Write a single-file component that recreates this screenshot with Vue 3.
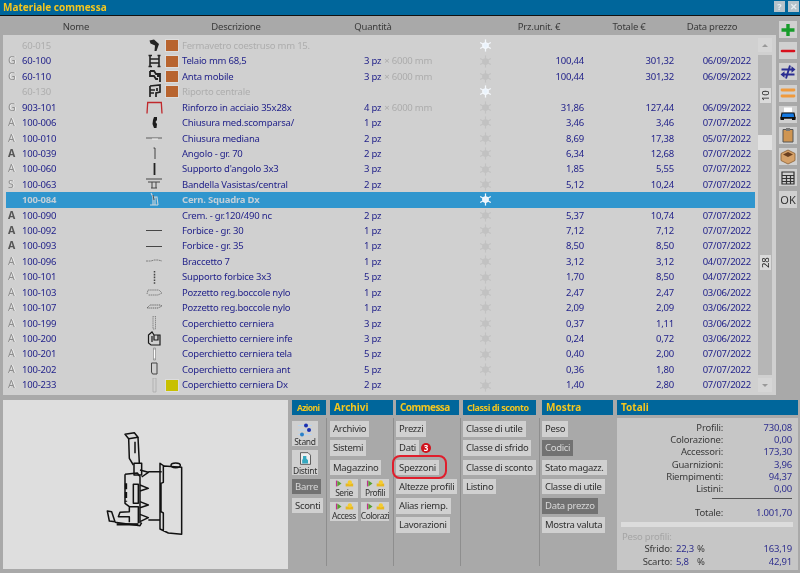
<script setup>
const ico = {
  ferma: [{ d: 'M4.5 2.5 L9 1.5 L14 6 L11.5 13 L9.5 13 L10 7.5 L5.5 5.5 Z', f: '#222' }],
  telaio: [{ d: 'M5 1 V13 M14 1 V13 M5 5 H14 M5 9 H14 M3.5 1.5 H7 M3.5 12.5 H7 M12.5 1.5 H15.5 M12.5 12.5 H15.5', s: '#222', w: 1.6 }],
  anta: [{ d: 'M5 2 H9 L11 5 H15 V13 M5 2 V7 H9 L11 10 H13 M12 7 H15', s: '#222', w: 1.8 }],
  riporto: [{ d: 'M5 2 L15 1 V8 L11 9 V13 M5 2 V13 M5 6 H10 M5 9 H9 M12 4 V7', s: '#222', w: 1.7 }],
  rinf: [{ d: 'M2 13.5 L2.7 2.5 H16.3 L17 13.5', s: '#c0282c', w: 1.3 }],
  blob: [{ d: 'M9 2 H12 L12 5 L10.5 7 L12 9 L11.5 13 H9 L7.5 9 L8 5 Z', f: '#1c1c1c' }],
  med: [{ d: 'M1 7 H17', s: '#666', w: 1.1 }, { d: 'M7 8 H13', s: '#f0f0f0', w: 1 }],
  angolo: [{ d: 'M8.5 2 H10 V13', s: '#333', w: 0.9 }],
  supp: [{ d: 'M9.5 1 V13', s: '#222', w: 1.8 }],
  band: [{ d: 'M1 2 H17 M3 5 H15 M7 5 V11 M11 5 V11 M6 11 H12', s: '#444', w: 1 }],
  cern: [{ d: 'M6 1 L8 5 V13 H13 M10 5 V13 M8 5 H12 L13 13 M5 13 H8', s: '#cfd6da', w: 1.1 }, { d: 'M8 3 L9 8', s: '#555', w: 1 }],
  line: [{ d: 'M1 7.5 H17', s: '#222', w: 0.8 }],
  brac: [{ d: 'M1 7 H6 L9 6 H13 L17 7', s: '#777', w: 0.9, a: '2 0.6' }],
  dash: [{ d: 'M9.5 1 V14', s: '#444', w: 1.5, a: '1.6 1.2' }],
  pozz: [{ d: 'M2 9 L3 5 H14 L17 8 L13 10 H3', s: '#777', w: 0.9, a: '1.5 0.6' }],
  pozz2: [{ d: 'M2 8 L5 5 H15 L17 6 L13 8 Z', s: '#666', w: 1, a: '1.2 0.7' }],
  cop: [{ d: 'M8 0 H10.5 V13 H8 Z', s: '#777', w: 0.8, a: '1.5 0.6' }],
  box: [{ d: 'M3.5 4 L7 1 L9 4 H15 V14 H6 L3.5 12 Z M9 4 V9 H13 V4 M7 5 V11', s: '#1a1a1a', w: 1.2 }],
  tela: [{ d: 'M8.5 1 H10.5 V13 H8.5 Z', s: '#888', w: 0.7 }, { d: 'M9.5 3 V11', s: '#fff', w: 1.2 }],
  ant: [{ d: 'M6.5 1 H12 V12 H7.5 L6.5 10 Z', s: '#444', w: 1 }],
  dx: [{ d: 'M8 0 H11 V14 H8 Z', s: '#a8a8a8', w: 0.7 }]
}
const sixty = '× 6000 mm'
const brown = '#b8642f'
const rows = [
  { mark: '', code: '60-015', desc: 'Fermavetro coestruso mm 15.', icon: 'ferma', sw: brown, dim: true, flake: true },
  { mark: 'G', code: '60-100', desc: 'Telaio mm 68,5', icon: 'telaio', sw: brown, qty: '3 pz', x: sixty, prz: '100,44', tot: '301,32', date: '06/09/2022' },
  { mark: 'G', code: '60-110', desc: 'Anta mobile', icon: 'anta', sw: brown, qty: '3 pz', x: sixty, prz: '100,44', tot: '301,32', date: '06/09/2022' },
  { mark: '', code: '60-130', desc: 'Riporto centrale', icon: 'riporto', sw: brown, dim: true, flake: true },
  { mark: 'G', code: '903-101', desc: 'Rinforzo in acciaio 35x28x', icon: 'rinf', qty: '4 pz', x: sixty, prz: '31,86', tot: '127,44', date: '06/09/2022' },
  { mark: 'A', code: '100-006', desc: 'Chiusura med.scomparsa/', icon: 'blob', qty: '1 pz', prz: '3,46', tot: '3,46', date: '07/07/2022' },
  { mark: 'A', code: '100-010', desc: 'Chiusura mediana', icon: 'med', qty: '2 pz', prz: '8,69', tot: '17,38', date: '05/07/2022' },
  { mark: 'A', strong: true, code: '100-039', desc: 'Angolo - gr. 70', icon: 'angolo', qty: '2 pz', prz: '6,34', tot: '12,68', date: '07/07/2022' },
  { mark: 'A', code: '100-060', desc: "Supporto d'angolo 3x3", icon: 'supp', qty: '3 pz', prz: '1,85', tot: '5,55', date: '07/07/2022' },
  { mark: 'S', code: '100-063', desc: 'Bandella Vasistas/central', icon: 'band', qty: '2 pz', prz: '5,12', tot: '10,24', date: '07/07/2022' },
  { mark: '', code: '100-084', desc: 'Cern. Squadra Dx', icon: 'cern', sel: true, flake: true },
  { mark: 'A', strong: true, code: '100-090', desc: 'Crem. - gr.120/490 nc', qty: '2 pz', prz: '5,37', tot: '10,74', date: '07/07/2022' },
  { mark: 'A', strong: true, code: '100-092', desc: 'Forbice - gr. 30', icon: 'line', qty: '1 pz', prz: '7,12', tot: '7,12', date: '07/07/2022' },
  { mark: 'A', strong: true, code: '100-093', desc: 'Forbice - gr. 35', icon: 'line', qty: '1 pz', prz: '8,50', tot: '8,50', date: '07/07/2022' },
  { mark: 'A', code: '100-096', desc: 'Braccetto 7', icon: 'brac', qty: '1 pz', prz: '3,12', tot: '3,12', date: '04/07/2022' },
  { mark: 'A', code: '100-101', desc: 'Supporto forbice 3x3', icon: 'dash', qty: '5 pz', prz: '1,70', tot: '8,50', date: '04/07/2022' },
  { mark: 'A', code: '100-103', desc: 'Pozzetto reg.boccole nylo', icon: 'pozz', qty: '1 pz', prz: '2,47', tot: '2,47', date: '03/06/2022' },
  { mark: 'A', code: '100-107', desc: 'Pozzetto reg.boccole nylo', icon: 'pozz2', qty: '1 pz', prz: '2,09', tot: '2,09', date: '03/06/2022' },
  { mark: 'A', code: '100-199', desc: 'Coperchietto cerniera', icon: 'cop', qty: '3 pz', prz: '0,37', tot: '1,11', date: '03/06/2022' },
  { mark: 'A', code: '100-200', desc: 'Coperchietto cerniere infe', icon: 'box', qty: '3 pz', prz: '0,24', tot: '0,72', date: '03/06/2022' },
  { mark: 'A', code: '100-201', desc: 'Coperchietto cerniera tela', icon: 'tela', qty: '5 pz', prz: '0,40', tot: '2,00', date: '07/07/2022' },
  { mark: 'A', code: '100-202', desc: 'Coperchietto cerniera ant', icon: 'ant', qty: '5 pz', prz: '0,36', tot: '1,80', date: '07/07/2022' },
  { mark: 'A', code: '100-233', desc: 'Coperchietto cerniera Dx', icon: 'dx', sw: '#c8c000', qty: '2 pz', prz: '1,40', tot: '2,80', date: '07/07/2022' }
]
const flakeArms = [0, 60, 120]
const commessa = ['Prezzi', 'Dati', 'Spezzoni', 'Altezze profili', 'Alias riemp.', 'Lavorazioni']
const classi = ['Classe di utile', 'Classe di sfrido', 'Classe di sconto', 'Listino']
const mostra = [
  { t: 'Peso' }, { t: 'Codici', on: true }, { t: 'Stato magazz.' },
  { t: 'Classe di utile' }, { t: 'Data prezzo', on: true }, { t: 'Mostra valuta' }
]
const minis = [['Serie', 'Profili'], ['Access', 'Colorazi']]
const totali = [
  ['Profili:', '730,08'], ['Colorazione:', '0,00'], ['Accessori:', '173,30'],
  ['Guarnizioni:', '3,96'], ['Riempimenti:', '94,37'], ['Listini:', '0,00']
]
</script>

<template>
  <div class="win">
    <header class="title">
      <span>Materiale commessa</span>
      <div class="winbtns"><b>?</b><b>✕</b></div>
    </header>

    <div class="main">
      <div class="left">
        <div class="heads">
          <span>Nome</span><span>Descrizione</span><span>Quantità</span><i></i>
          <span>Prz.unit. €</span><span>Totale €</span><span>Data prezzo</span>
        </div>
        <div class="panel">
          <div class="rows">
            <div v-for="r in rows" :key="r.code" class="row" :class="{ dim: r.dim, sel: r.sel }">
              <span class="mark" :class="{ strong: r.strong }">{{ r.mark }}</span>
              <span class="code">{{ r.code }}</span>
              <span class="ic">
                <svg v-if="r.icon" viewBox="0 0 20 15" width="20" height="15">
                  <path v-for="(p, i) in ico[r.icon]" :key="i" :d="p.d" :fill="p.f || 'none'" :stroke="p.s || 'none'"
                    :stroke-width="p.w || 0" :stroke-dasharray="p.a" />
                </svg>
              </span>
              <span class="swc"><i v-if="r.sw" class="sw" :style="{ background: r.sw }"></i></span>
              <span class="desc">{{ r.desc }}</span>
              <span class="qty">{{ r.qty }}<em v-if="r.x">{{ r.x }}</em></span>
              <span class="fl">
                <svg viewBox="-8 -8 16 16" width="13" height="13" :class="r.flake ? 'hot' : 'cold'">
                  <g v-for="a in flakeArms" :key="a" :transform="`rotate(${a})`">
                    <path d="M0 -7.5 V7.5" />
                  </g>
                  <circle r="3.4" />
                </svg>
              </span>
              <span class="num">{{ r.prz }}</span>
              <span class="num">{{ r.tot }}</span>
              <span class="num">{{ r.date }}</span>
            </div>
          </div>
          <div class="scroll">
            <div class="arrow"><i class="up"></i></div>
            <div class="track">
              <span class="mk mk10">10</span>
              <span class="thumb"></span>
              <span class="mk mk28">28</span>
            </div>
            <div class="arrow"><i class="down"></i></div>
          </div>
        </div>
      </div>

      <aside class="side">
        <button><svg viewBox="0 0 18 16"><path d="M9 2 V14 M2.5 8 H15.5" stroke="#169c2a" stroke-width="3.4" /></svg></button>
        <button><svg viewBox="0 0 18 16"><path d="M3 8 H15" stroke="#d8101c" stroke-width="2.6" stroke-linecap="round" /></svg></button>
        <button><svg viewBox="0 0 18 16"><path d="M2.5 5.5 H13 M15.5 10.5 H5 M11 1.5 L7 14.5" stroke="#2a2d92" stroke-width="1.9" fill="none" /><path d="M16.5 5.5 L12.5 2.2 V8.8 Z M1.5 10.5 L5.5 7.2 V13.8 Z" fill="#2a2d92" /></svg></button>
        <button><svg viewBox="0 0 18 16"><path d="M3 5 H15 M3 11 H15" stroke="#f09a3c" stroke-width="2.8" stroke-linecap="round" /></svg></button>
        <button><svg viewBox="0 0 18 16"><path d="M5 1.5 H13 V6 H5 Z" fill="#fff" /><path d="M2 12 L3 7 H15 L16 12 Z" fill="#1478e0" stroke="#111" stroke-width="1.2" /><path d="M1.5 11 H16.5 V14 H13 V12.5 H5 V14 H1.5 Z" fill="#111" /></svg></button>
        <button><svg viewBox="0 0 18 16"><path d="M4 2.5 H14 V15 H4 Z" fill="#cf9552" stroke="#555" stroke-width="1" /><path d="M7 1 H11 V4 H7 Z" fill="#777" /></svg></button>
        <button><svg viewBox="0 0 18 16"><path d="M9 1 L16 4.5 V11.5 L9 15 L2 11.5 V4.5 Z" fill="#d6a26a" stroke="#8a6034" stroke-width=".8" /><path d="M9 3 L14 5.5 L9 8 L4 5.5 Z" fill="#6b4020" /></svg></button>
        <button><svg viewBox="0 0 18 16"><path d="M3 2 H15 V14 H3 Z M3 5.5 H15 M3 8.5 H15 M3 11.5 H15 M7.5 5.5 V14 M11.5 5.5 V14" fill="none" stroke="#333" stroke-width="1.2" /></svg></button>
        <button class="ok">OK</button>
      </aside>
    </div>

    <div class="bottom">
      <div class="preview">
        <svg viewBox="9 15 855 507" width="285" height="169" fill="none" stroke="#111" stroke-width="4.5" stroke-linejoin="round">
          <path d="M375 118 L403 113 L414 127 L386 131 Z" />
          <path d="M386 131 L388 190 L400 210 M414 127 L418 205 M405 140 V175" />
          <path d="M402 205 H425 V240 H402 Z" />
          <path d="M375 238 L412 234 L420 245 V385 M375 238 V325 L388 335 V350 L360 352 L355 365 H388 V382 M388 335 H415 V385" />
          <path d="M400 268 H415 V325 H400 Z" />
          <path d="M378 265 V320" stroke-width="7" stroke-dasharray="18 8" />
          <path d="M420 225 L445 232 L425 246 M420 270 L445 280 L420 288 M420 320 L445 330 L420 338 M420 358 L445 368 L420 380" />
          <path d="M445 230 H485 M445 375 H480" />
          <path d="M480 205 L492 213 L545 217 V418 L505 414 L480 402 Z M490 213 V262 L483 265 V350 L490 354 V408" />
          <ellipse cx="527" cy="211" rx="14" ry="7" />
          <path d="M322 348 L335 350 L345 380 L328 378 Z M345 382 L420 392 L425 383" />
          <path d="M350 388 H415" stroke-width="7" />
        </svg>
      </div>

      <section class="grp g-az">
        <h3 class="small">Azioni</h3>
        <div class="col">
          <button class="tall">
            <svg viewBox="0 0 18 14" width="18" height="14"><path d="M2 2.5 H16 M2 7 H16 M2 11.5 H16" stroke="#b8d4ee" stroke-width="1.2" /><circle cx="10" cy="2.5" r="2" fill="#1a2fb0" /><circle cx="13" cy="7" r="2" fill="#1a2fb0" /><circle cx="6" cy="11.5" r="2" fill="#2a80c8" /></svg>
            <span>Stand</span>
          </button>
          <button class="tall">
            <svg viewBox="0 0 18 16" width="15" height="15"><path d="M3 1 H12 L15 4 V15 H3 Z" fill="#eee" stroke="#444" /><path d="M6 5 H10 V8 L12 10 V14 H5 V10 L6 8 Z" fill="#35a8c0" /></svg>
            <span>Distint</span>
          </button>
          <button class="on w28">Barre</button>
          <button>Sconti</button>
        </div>
      </section>

      <section class="grp g-ar">
        <h3>Archivi</h3>
        <div class="col">
          <button>Archivio</button>
          <button>Sistemi</button>
          <button>Magazzino</button>
          <div v-for="(pair, i) in minis" :key="i" class="minirow">
            <button v-for="m in pair" :key="m" class="mini">
              <svg viewBox="0 0 24 8" width="20" height="7"><path d="M4 0.5 V7.5 L9 4 Z" fill="#58a030" /><path d="M3 0.5 V7.5" stroke="#c03090" stroke-width="1.4" /><path d="M14 4 H23 V7.5 H14 Z" fill="#e8b820" /><circle cx="19" cy="2.8" r="2.6" fill="#f4cc30" /></svg>
              <span>{{ m }}</span>
            </button>
          </div>
        </div>
      </section>

      <section class="grp g-co">
        <h3>Commessa</h3>
        <div class="col">
          <div v-for="c in commessa" :key="c" class="btnline">
            <button>{{ c }}</button>
            <span v-if="c === 'Dati'" class="badge">3</span>
            <i v-if="c === 'Spezzoni'" class="ring"></i>
          </div>
        </div>
      </section>

      <section class="grp g-cl">
        <h3 class="small">Classi di sconto</h3>
        <div class="col">
          <button v-for="c in classi" :key="c">{{ c }}</button>
        </div>
      </section>

      <section class="grp g-mo">
        <h3>Mostra</h3>
        <div class="col">
          <button v-for="m in mostra" :key="m.t" :class="{ on: m.on }">{{ m.t }}</button>
        </div>
      </section>

      <section class="tot">
        <h3>Totali</h3>
        <div class="totbody">
          <div v-for="t in totali" :key="t[0]" class="tline"><span>{{ t[0] }}</span><b>{{ t[1] }}</b></div>
          <hr />
          <div class="tline"><span>Totale:</span><b>1.001,70</b></div>
          <div class="bar"></div>
          <div class="peso">Peso profili:</div>
          <div class="sline"><span>Sfrido:</span><b>22,3</b><u>%</u><b class="r">163,19</b></div>
          <div class="sline"><span>Scarto:</span><b>5,8</b><u>%</u><b class="r">42,91</b></div>
        </div>
      </section>
    </div>
  </div>
</template>

<style>
html, body { margin: 0; background: #a9a9a9; }
</style>

<style scoped>
.win {
  width: 800px; height: 573px; overflow: hidden; background: #a9a9a9; color: #2b2b2b;
  font: 9.5px/15px "Noto Sans", "Open Sans", sans-serif; filter: blur(.4px); letter-spacing: -.22px;
  display: flex; flex-direction: column;
}
button { font: inherit; letter-spacing: -.3px; color: #303030; border: 0; padding: 0; margin: 0; background: #d0d0d0; }
h3 { margin: 0; font-weight: 700; letter-spacing: 0; }
.title {
  flex: none; height: 15px; background: #00669b; border-bottom: 1px solid #111;
  color: #f4c61e; font-size: 10px; font-weight: 700; line-height: 15px; padding-left: 3px;
  display: flex; justify-content: space-between; letter-spacing: 0;
}
.winbtns { display: flex; gap: 3px; padding: 1px 1px 0 0; }
.winbtns b {
  width: 11px; height: 11px; background: #b5c2ca; color: #e8eef2; font: 700 9px/11px "Noto Sans", sans-serif;
  text-align: center;
}
.main { flex: none; height: 379px; display: flex; padding-left: 3px; }
.left { width: 773px; }
.heads {
  height: 19px; margin-left: -3px; display: grid; align-items: center; text-align: center; color: #3a3a3a;
  grid-template-columns: 140px 180px 94px 74px 90px 90px 76px; padding: 1px 0 0 6px; box-sizing: border-box;
}
.panel { height: 360px; background: #d0d0d0; box-sizing: border-box; padding: 3px; display: flex; }
.rows { width: 749px; }
.row {
  height: 15.43px; line-height: 15.43px; color: #23238a; display: grid; align-items: center;
  grid-template-columns: 16px 123px 20px 17px 182px 111px 20px 89px 90px 77px 4px;
}
.row.dim { color: #adadad; }
.row.sel { background: #3096ce; color: #c2cfd8; font-weight: 700; }
.mark {
  padding-left: 2px; font-weight: 400; font-size: 10.5px; color: #8e8e8e; letter-spacing: 0;
  text-shadow: .9px 0 #ececec;
}
.mark.strong { color: #555; font-weight: 700; text-shadow: none; }
.ic { height: 15px; display: block; }
.ic svg { display: block; }
.swc { display: flex; align-items: center; height: 100%; }
.sw { width: 12px; height: 11px; border: 1px solid #dcdcdc; display: block; }
.qty em { font-style: normal; color: #acacac; margin-left: 3px; }
.fl { display: flex; justify-content: center; align-items: center; }
.fl svg { display: block; stroke-width: 1.5; }
.fl .hot { stroke: #f4f8fd; fill: #eaf3fc; }
.fl .cold { stroke: #c2c2c2; fill: #c2c2c2; }
.num { text-align: right; }
.scroll { margin-left: 3px; width: 14px; display: flex; flex-direction: column; gap: 3px; }
.arrow { height: 14px; background: #d6d6d6; display: flex; align-items: center; justify-content: center; }
.arrow i { width: 0; height: 0; border: 3px solid transparent; }
.arrow .up { border-bottom-color: #999; border-top: 0; }
.arrow .down { border-top-color: #999; border-bottom: 0; }
.track { position: relative; flex: 1; background: #b6b6b6; }
.mk {
  position: absolute; left: 2px; width: 11px; height: 15px; background: #dadada; color: #222;
  font-size: 9.5px; line-height: 11px; text-align: center; writing-mode: vertical-rl; transform: rotate(180deg);
}
.mk10 { top: 33px; }
.mk28 { top: 200px; }
.thumb { position: absolute; left: 0; right: 0; top: 80px; height: 15px; background: #e2e2e2; }

.side { margin-left: 3px; width: 18px; padding-top: 5px; display: flex; flex-direction: column; gap: 4.2px; }
.side button { height: 17px; display: block; }
.side svg { width: 18px; height: 16px; display: block; }
.side .ok { font-size: 11px; color: #333; line-height: 17px; letter-spacing: 0; }

.bottom { flex: 1; display: flex; padding: 5px 0 4px 3px; min-height: 0; }
.preview { width: 285px; height: 169px; background: #dedede; flex: none; margin-right: 4px; }
.preview svg { display: block; }
.grp { flex: none; }
.grp h3 {
  height: 15px; background: #00669b; color: #f4c61e; font-size: 10px; line-height: 15px; padding-left: 4px;
  margin-bottom: 6px;
}
.grp h3.small { font-size: 9px; padding-left: 4px; white-space: nowrap; letter-spacing: -.45px; }
.g-az h3.small { font-size: 8.5px; padding-left: 5px; letter-spacing: -.6px; }
.g-co h3 { letter-spacing: -.55px; }
.col {
  display: flex; flex-direction: column; align-items: flex-start; gap: 3.8px;
  height: 148px; box-sizing: border-box; border-right: 1.5px solid #8e8e8e; margin-top: -3px; padding-top: 3px;
}
.col > button, .btnline > button { height: 15.5px; padding: 0 3px; line-height: 15.5px; white-space: nowrap; }
.col button.on { background: #727272; color: #d8d8d8; }
.g-az { width: 34px; margin-right: 4px; }
.g-az .col { width: 35px; }
.g-ar { width: 63px; margin-right: 3px; }
.g-ar .col { width: 64px; }
.g-co { width: 63px; margin-right: 4px; }
.g-co .col { width: 65px; }
.g-cl { width: 73px; margin-right: 6px; }
.g-cl .col { width: 77px; }
.g-mo { width: 71px; margin-right: 4px; }
.g-mo .col { border-right: 0; }
.col > button.tall {
  width: 26px; height: 25px; padding: 0; font-size: 8.5px; line-height: 9px;
  display: flex; flex-direction: column; align-items: center; justify-content: flex-end; overflow: visible;
}
.tall svg { display: block; }
.minirow { display: flex; gap: 3px; }
.mini {
  width: 28px; height: 19px; font-size: 8.5px; line-height: 9px; display: flex; flex-direction: column; align-items: center;
  padding-top: 1px; box-sizing: border-box; white-space: nowrap; letter-spacing: -.45px; gap: 1px;
}
.mini svg { display: block; flex: none; }
.btnline { position: relative; display: flex; align-items: center; }
.badge {
  width: 10px; height: 10px; margin-left: 2px; border-radius: 50%; background: #d0121c; color: #fff;
  font: 700 8px/10px "Noto Sans", sans-serif; text-align: center;
}
.ring {
  position: absolute; left: -4px; top: -5px; width: 51px; height: 20px; border: 2.6px solid #e01e2c; border-radius: 8px;
}
.tot { flex: none; width: 181px; }
.tot h3 {
  height: 15px; background: #00669b; color: #f4c61e; font-size: 10px; line-height: 15px; padding-left: 4px; margin-bottom: 3px;
}
.totbody {
  background: #c6c6c6; height: 152px; padding-top: 4px; box-sizing: border-box; color: #3a3a3a;
}
.tline { height: 12.2px; line-height: 12.2px; display: flex; }
.tline span { width: 106px; text-align: right; }
.tline b, .sline b { font-weight: 400; color: #2f2f8e; }
.tline b { width: 69px; text-align: right; }
.totbody hr { margin: 3px 6px 8px auto; width: 80px; height: 1px; background: #555; border: 0; }
.bar { height: 5px; background: #dcdcdc; margin: 3px 5px 3px 4px; }
.peso { color: #a5a5a5; height: 13px; line-height: 13px; padding-left: 5px; }
.sline { height: 12.3px; line-height: 12.3px; display: flex; }
.sline span { width: 55px; text-align: right; }
.sline b { width: 23px; padding-left: 4px; box-sizing: border-box; }
.sline u { text-decoration: none; width: 8px; padding-left: 0; margin-left: 2px; }
.sline .r { width: 87px; text-align: right; margin-left: 0; padding: 0; }
</style>
